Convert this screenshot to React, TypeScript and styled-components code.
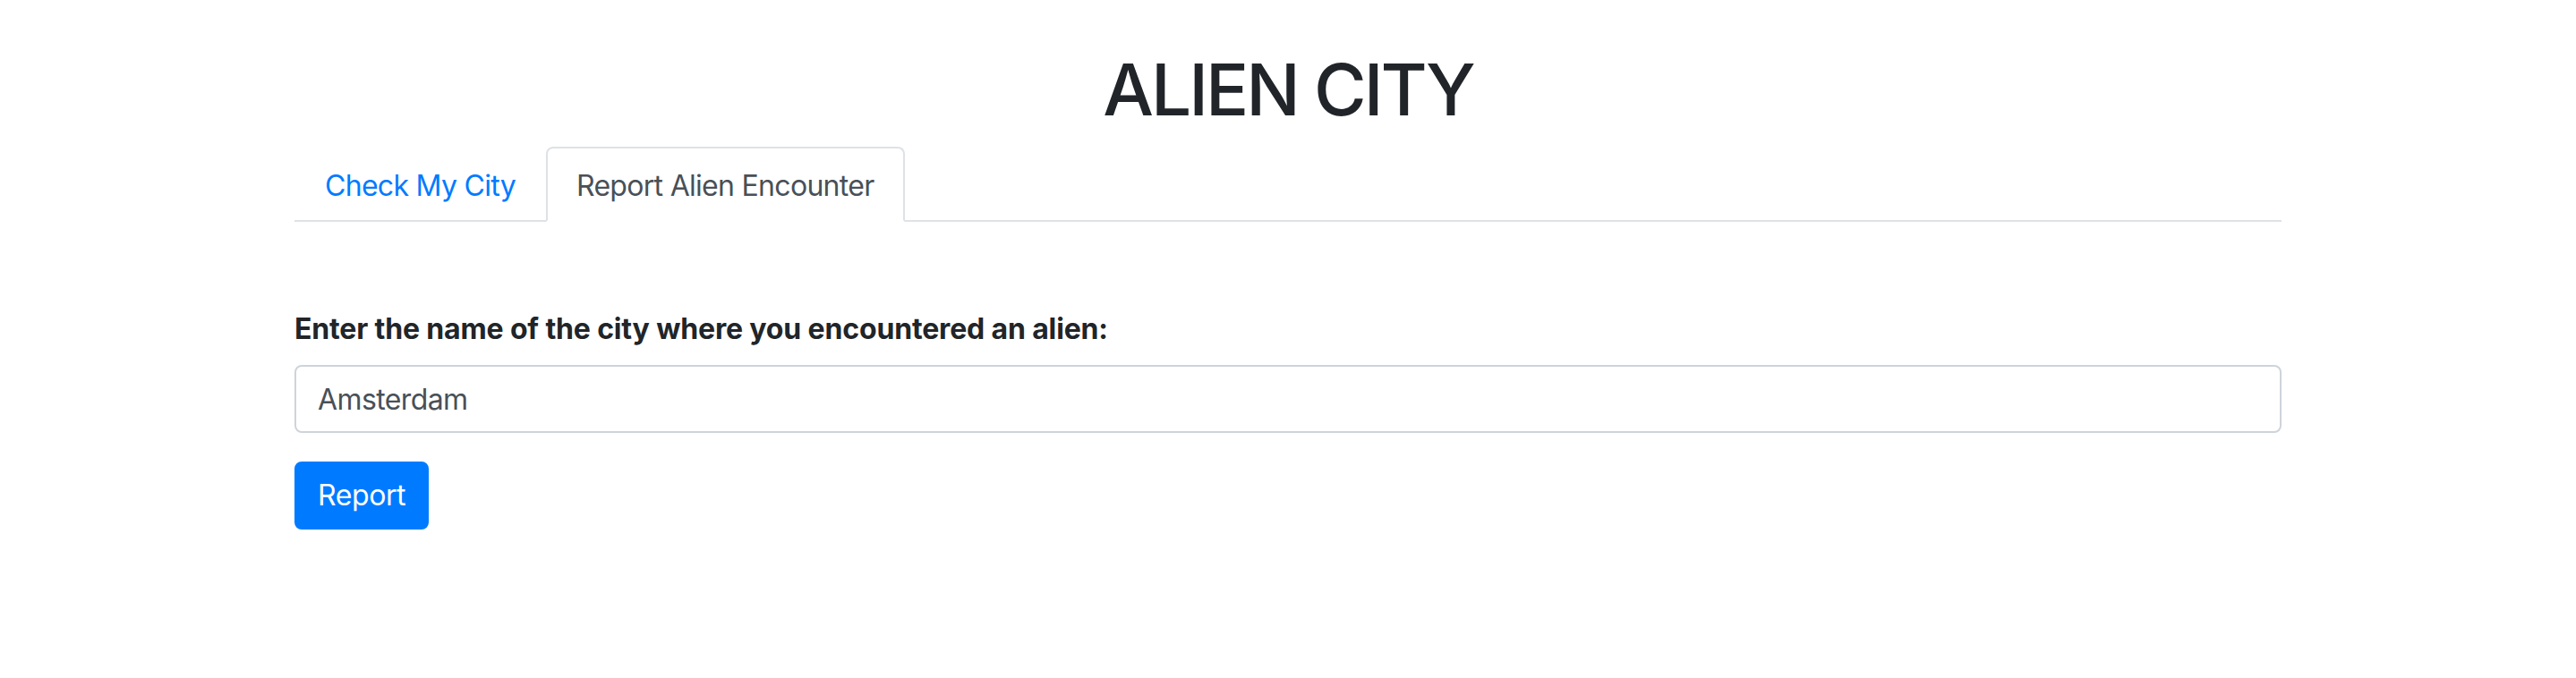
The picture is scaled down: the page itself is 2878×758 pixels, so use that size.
import React from 'react'
import styled, { createGlobalStyle } from 'styled-components'

const GlobalStyle = createGlobalStyle`
  body {
    margin: 0;
    font-family: Inter, "Liberation Sans", sans-serif;
    font-size: 32px;
    line-height: 1.5;
    color: #212529;
    background: #fff;
  }
  * {
    box-sizing: border-box;
  }
`

const Container = styled.div`
  max-width: 2280px;
  margin: 0 auto;
  padding: 0 30px;
`

const Title = styled.h1`
  margin: 52px 0 16px;
  font-size: 80px;
  font-weight: 500;
  line-height: 1.2;
  letter-spacing: -3px;
  text-align: center;
`

const Tabs = styled.nav`
  display: flex;
  border-bottom: 2px solid #dee2e6;
`

const Tab = styled.a<{ $active?: boolean }>`
  display: block;
  margin-bottom: -2px;
  padding: 18px 32px 14px;
  border: 2px solid transparent;
  border-color: ${({ $active }) => ($active ? '#dee2e6 #dee2e6 #fff' : 'transparent')};
  border-radius: 8px 8px 0 0;
  color: ${({ $active }) => ($active ? '#495057' : '#007bff')};
  background: ${({ $active }) => ($active ? '#fff' : 'transparent')};
  letter-spacing: -0.7px;
  text-decoration: none;
  cursor: pointer;
`

const Form = styled.form`
  margin-top: 96px;
`

const Group = styled.div`
  margin-bottom: 32px;
`

const Label = styled.label`
  display: block;
  margin-bottom: 16px;
  font-weight: 700;
  letter-spacing: -0.15px;
`

const Input = styled.input`
  display: block;
  width: 100%;
  height: 76px;
  padding: 12px 24px;
  font: inherit;
  letter-spacing: -0.6px;
  color: #495057;
  border: 2px solid #ced4da;
  border-radius: 8px;
  background: #fff;
  outline: none;
`

const Button = styled.button`
  padding: 12px 24px;
  font: inherit;
  letter-spacing: -0.4px;
  color: #fff;
  background: #007bff;
  border: 2px solid #007bff;
  border-radius: 8px;
  cursor: pointer;
`

export default function App() {
  return (
    <>
      <GlobalStyle />
      <Container>
        <Title>ALIEN CITY</Title>
        <Tabs>
          <Tab>Check My City</Tab>
          <Tab $active>Report Alien Encounter</Tab>
        </Tabs>
        <Form onSubmit={(e) => e.preventDefault()}>
          <Group>
            <Label htmlFor="city">Enter the name of the city where you encountered an alien:</Label>
            <Input id="city" defaultValue="Amsterdam" />
          </Group>
          <Button type="submit">Report</Button>
        </Form>
      </Container>
    </>
  )
}
